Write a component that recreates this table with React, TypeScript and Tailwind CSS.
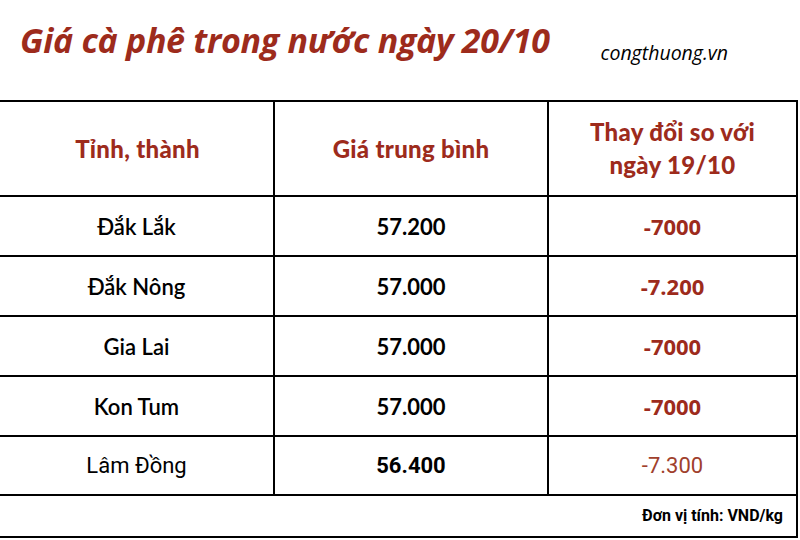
import React from "react";

const RED = "text-[#9d2b1c]";

const rows = [
  { name: "Đắk Lắk", price: "57.200", change: "-7000", alt: false },
  { name: "Đắk Nông", price: "57.000", change: "-7.200", alt: false },
  { name: "Gia Lai", price: "57.000", change: "-7000", alt: false },
  { name: "Kon Tum", price: "57.000", change: "-7000", alt: false },
  { name: "Lâm Đồng", price: "56.400", change: "-7.300", alt: true },
];

export default function App() {
  return (
    <div className="w-[800px] h-[540px] bg-white overflow-hidden">
      <div className="h-[100px] flex items-start">
        <div
          className={`pl-[20px] pt-[18px] text-[34px] font-bold italic ${RED} leading-[44px] tracking-[-0.3px] whitespace-nowrap`}
          style={{ fontFamily: '"Open Sans", "Noto Sans", sans-serif' }}
        >
          Giá cà phê trong nước ngày 20/10
        </div>
        <div
          className="ml-[51px] pt-[41px] text-[19.5px] italic font-medium text-black leading-[24px] whitespace-nowrap"
          style={{ fontFamily: '"Open Sans", "Noto Sans", sans-serif' }}
        >
          congthuong.vn
        </div>
      </div>
      <div className="w-[798px] border-t-2 border-r-2 border-black">
        <div
          className={`grid grid-cols-[275px_274px_247px] h-[95px] border-b-2 border-black font-black text-[24px] tracking-[0.3px] ${RED}`}
          style={{ fontFamily: 'Lato, "Noto Sans", sans-serif' }}
        >
          <div className="border-r-2 border-black flex items-center justify-center pl-[2px]">Tỉnh, thành</div>
          <div className="border-r-2 border-black flex items-center justify-center">Giá trung bình</div>
          <div className="flex items-center justify-center text-center leading-[33px] pb-[2px]">
            Thay đổi so với
            <br />
            ngày 19/10
          </div>
        </div>
        {rows.map((r, i) => (
          <div
            key={i}
            className={`grid grid-cols-[275px_274px_247px] ${i === 4 ? "h-[59px]" : "h-[60px]"} border-b-2 border-black text-[22px]`}
          >
            <div
              className="border-r-2 border-black flex items-center justify-center text-black"
              style={{ fontFamily: r.alt ? 'Roboto, sans-serif' : 'Lato, "Noto Sans", sans-serif', fontWeight: r.alt ? 400 : 600 }}
            >
              {r.name}
            </div>
            <div
              className="border-r-2 border-black flex items-center justify-center text-black font-bold"
              style={{ fontFamily: r.alt ? 'Roboto, sans-serif' : 'Lato, "Noto Sans", sans-serif' }}
            >
              {r.price}
            </div>
            <div
              className={`flex items-center justify-center ${r.alt ? "text-[#a0402c] font-normal" : `${RED} font-bold`}`}
              style={{ fontFamily: r.alt ? 'Roboto, sans-serif' : '"Open Sans", "Noto Sans", sans-serif' }}
            >
              {r.change}
            </div>
          </div>
        ))}
        <div className="h-[42px] border-b-2 border-black flex items-center justify-end pr-[13px]">
          <span
            className="text-[16px] font-bold text-black"
            style={{ fontFamily: 'Roboto, sans-serif' }}
          >
            Đơn vị tính: VND/kg
          </span>
        </div>
      </div>
    </div>
  );
}
